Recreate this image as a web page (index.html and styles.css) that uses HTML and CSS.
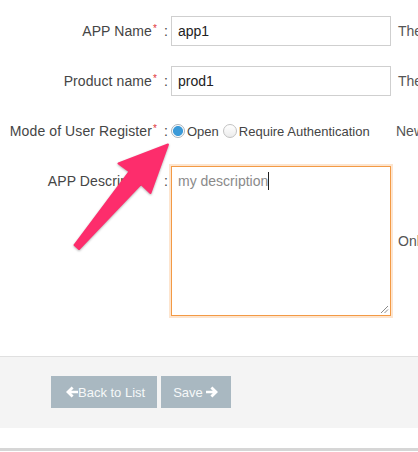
FILE: index.html
```html
<!DOCTYPE html>
<html>
<head>
<meta charset="utf-8">
<link rel="stylesheet" href="styles.css">
</head>
<body>
<div class="page">
  <form class="form">
    <div class="row">
      <label class="label">APP Name<span class="req">*</span></label>
      <span class="colon">:</span>
      <div class="field"><input class="input" type="text" value="app1"></div>
      <span class="help">The unique name of the app</span>
    </div>
    <div class="row">
      <label class="label">Product name<span class="req">*</span></label>
      <span class="colon">:</span>
      <div class="field"><input class="input" type="text" value="prod1"></div>
      <span class="help">The product this app belongs to</span>
    </div>
    <div class="row">
      <label class="label">Mode of User Register<span class="req">*</span></label>
      <span class="colon">:</span>
      <div class="field radios">
        <span class="radio-opt"><span class="radio checked"></span>Open</span>
        <span class="radio-opt"><span class="radio"></span>Require Authentication</span>
      </div>
      <span class="help help-radio">New users can register freely</span>
    </div>
    <div class="row row-top">
      <label class="label label-top">APP Description</label>
      <span class="colon colon-top">:</span>
      <div class="field">
        <div class="textarea"><span class="ta-text">my description</span><span class="caret"></span>
          <svg class="grip" width="9" height="9" viewBox="0 0 9 9"><path d="M1 8 L8 1 M4.5 8 L8 4.5" stroke="#8a8a8a" stroke-width="1"/></svg>
        </div>
      </div>
      <span class="help">Only 200 characters allowed</span>
    </div>
  </form>
  <div class="footer">
    <button class="btn" type="button"><svg class="ico" width="12" height="12" viewBox="0 0 12 12"><path d="M0 6 L5.6 0.4 L7.6 2.4 L5.2 4.8 H12 V7.2 H5.2 L7.6 9.6 L5.6 11.6 Z" fill="#fff"/></svg>Back to List</button>
    <button class="btn btn-save" type="button">Save<svg class="ico" width="12" height="12" viewBox="0 0 12 12"><path d="M12 6 L6.4 0.4 L4.4 2.4 L6.8 4.8 H0 V7.2 H6.8 L4.4 9.6 L6.4 11.6 Z" fill="#fff"/></svg></button>
  </div>
  <div class="bottom-gap"></div>
  <svg class="arrow" width="418" height="452" viewBox="0 0 418 452">
    <polygon points="168,144.5 150.5,193 141,184 79,249 74.5,245 129.5,171.5 118.5,163.5" fill="#fd2d6c" stroke="#fd2d6c" stroke-width="2" stroke-linejoin="round"/>
  </svg>
</div>
</body>
</html>
```

FILE: styles.css
```css
html, body {
  margin: 0;
  padding: 0;
  background: #fff;
}
body {
  width: 418px;
  height: 452px;
  overflow: hidden;
  font-family: "Liberation Sans", Arial, sans-serif;
  font-size: 14px;
  color: #444;
}
.page {
  position: relative;
  width: 418px;
  height: 452px;
  overflow: hidden;
}
.form {
  display: flex;
  flex-direction: column;
  gap: 20px;
  padding: 16px 0 40px 0;
  margin: 0;
}
.row {
  display: grid;
  grid-template-columns: 157px 14px 220px minmax(0, 1fr);
  align-items: center;
  height: 30px;
}
.row-top {
  height: 150px;
}
.label {
  text-align: right;
  color: #454545;
  white-space: nowrap;
  line-height: 30px;
  height: 30px;
  letter-spacing: 0.1px;
}
.label-top {
  align-self: start;
  padding-right: 6px;
}
.req {
  position: relative;
  top: -4px;
  color: #e0343a;
  font-size: 10px;
  line-height: 0;
  margin-left: 1px;
}
.colon {
  color: #454545;
  padding-left: 7px;
  line-height: 30px;
  height: 30px;
}
.colon-top {
  align-self: start;
}
.field {
  width: 220px;
}
.input {
  display: block;
  box-sizing: border-box;
  width: 220px;
  height: 30px;
  border: 1px solid #cfcfcf;
  border-radius: 0;
  padding: 0 6px;
  margin: 0;
  font-family: "Liberation Sans", Arial, sans-serif;
  font-size: 14px;
  color: #222;
  background: #fff;
  outline: none;
}
.help {
  padding-left: 7px;
  white-space: nowrap;
  overflow: hidden;
  color: #555;
  line-height: 18px;
}
.help-radio {
  padding-left: 5px;
}
.radios {
  display: flex;
  align-items: center;
  font-size: 13px;
  color: #444;
  white-space: nowrap;
  height: 30px;
}
.radio-opt {
  display: inline-flex;
  align-items: center;
  margin-right: 4px;
}
.radio {
  box-sizing: border-box;
  width: 14px;
  height: 14px;
  border-radius: 50%;
  border: 1px solid #c2c2c2;
  background: linear-gradient(#ffffff, #ececec);
  margin-right: 2px;
}
.radio.checked {
  border-color: #a9b3bb;
  background: radial-gradient(circle, #3b9ad8 0, #3b9ad8 4.6px, #ffffff 5.4px);
}
.textarea {
  position: relative;
  box-sizing: border-box;
  width: 220px;
  height: 150px;
  border: 1px solid #f39a45;
  box-shadow: 0 0 0 2px #fde5cf;
  padding: 4px 6px;
  line-height: 20px;
  color: #8a8a8a;
  background: #fff;
}
.caret {
  display: inline-block;
  width: 1px;
  height: 18px;
  background: #222;
  vertical-align: -4px;
}
.grip {
  position: absolute;
  right: 1px;
  bottom: 1px;
}
.footer {
  display: flex;
  gap: 4px;
  border-top: 1px solid #e0e0e0;
  background: #f4f4f4;
  padding: 19px 0 20px 51px;
}
.btn {
  display: inline-flex;
  align-items: center;
  height: 32px;
  border: none;
  border-radius: 0;
  margin: 0;
  padding: 0 12px 0 15px;
  background: #a9b8c1;
  color: #f6f8f9;
  font-family: "Liberation Sans", Arial, sans-serif;
  font-size: 13px;
}
.btn-save {
  padding: 0 13px 0 12px;
}
.btn-save .ico {
  margin-left: 3px;
}
.bottom-gap {
  height: 20px;
  border-bottom: 3px solid #d6d6d6;
}
.arrow {
  position: absolute;
  left: 0;
  top: 0;
  pointer-events: none;
  filter: drop-shadow(0 1px 1px rgba(0, 0, 0, 0.3));
}
```
